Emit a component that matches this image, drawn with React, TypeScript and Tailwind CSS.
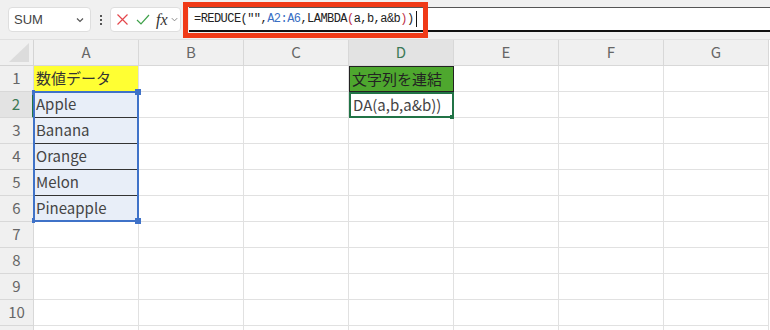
import React from 'react';

const cols = ['A', 'B', 'C', 'D', 'E', 'F', 'G'];
const rows = [1, 2, 3, 4, 5, 6, 7, 8, 9, 10, 11];

const data: Record<string, string> = {
  A1: '数値データ',
  A2: 'Apple',
  A3: 'Banana',
  A4: 'Orange',
  A5: 'Melon',
  A6: 'Pineapple',
  D1: '文字列を連結',
  D2: 'DA(a,b,a&b))',
};

const font = { fontFamily: '"Noto Sans CJK JP", "Noto Sans", sans-serif' };

const cellClass = (key: string, r: number) => {
  if (key === 'A1') return 'bg-[#ffff33] border-r border-b border-[#e1e1e1] text-[#333]';
  if (key[0] === 'A' && r >= 2 && r <= 6) {
    return r < 6
      ? 'bg-[#e8eef8] border-r border-b border-r-[#e1e1e1] border-b-[#333] text-[#444]'
      : 'bg-[#e8eef8] border-r border-b border-[#e1e1e1] text-[#444]';
  }
  if (key === 'D1') return 'bg-[#4ea72e] border border-[#222] text-[#222]';
  if (key === 'D2') return 'bg-white border-2 border-[#217346] text-[#444]';
  return 'bg-white border-r border-b border-[#e1e1e1]';
};

export default function App() {
  return (
    <div className="w-[770px] h-[330px] overflow-hidden bg-[#f0f0f0]" style={font}>
      {/* toolbar */}
      <div className="h-10 flex items-center pl-2 border-b border-[#e0e0e0]">
        <div className="w-[83px] h-[25px] bg-white rounded border border-[#dedede] flex items-center justify-between px-[5px]">
          <span className="text-[13px] text-[#444]" style={{ fontFamily: '"Liberation Sans", sans-serif' }}>SUM</span>
          <svg width="10" height="10" viewBox="0 0 10 10" className="text-[#555]">
            <path d="M2 3.5 L5 6.5 L8 3.5" fill="none" stroke="currentColor" strokeWidth="1.2" />
          </svg>
        </div>
        <div className="w-[19px] flex flex-col items-center gap-[2px]">
          <span className="w-[2px] h-[2px] bg-[#555]" />
          <span className="w-[2px] h-[2px] bg-[#555]" />
          <span className="w-[2px] h-[2px] bg-[#555]" />
        </div>
        <div className="w-[71px] h-[25px] bg-white rounded border border-[#dedede] flex items-center gap-[7px] pl-[5px]">
          <svg width="13" height="13" viewBox="0 0 13 13">
            <path d="M1.5 1.5 L11.5 11.5 M11.5 1.5 L1.5 11.5" stroke="#e4474c" strokeWidth="1.2" fill="none" />
          </svg>
          <svg width="14" height="13" viewBox="0 0 14 13">
            <path d="M1 7 L5 11 L13 2" stroke="#3fa14a" strokeWidth="1.2" fill="none" />
          </svg>
          <span className="text-[16px] italic text-[#333] leading-none -ml-[1px]" style={{ fontFamily: '"Liberation Serif", serif' }}>
            fx
          </span>
          <svg width="9" height="9" viewBox="0 0 10 10" className="-ml-[5px] text-[#888]">
            <path d="M2 3.5 L5 6.5 L8 3.5" fill="none" stroke="currentColor" strokeWidth="1.1" />
          </svg>
        </div>
        <div className="relative flex-1 h-[25px] ml-[8px] bg-white border-y border-t-[#555] border-b-2 border-b-[#111] flex items-center">
          <div className="absolute -left-[6px] -top-[6px] w-[245px] h-[36px] border-[5px] border-[#f03a17]" />
          <span
            className="pl-[5px] text-[12px] tracking-[-0.55px] text-[#222] whitespace-pre"
            style={{ fontFamily: '"Liberation Mono", monospace' }}
          >
            =REDUCE("",<span className="text-[#3a6fc4]">A2:A6</span>,LAMBDA<span className="text-[#c0304a]">(</span>a,b,a&b<span className="text-[#c0304a]">)</span>)
          </span>
          <span className="w-px h-[16px] bg-[#111] ml-[2px]" />
        </div>
      </div>

      {/* grid */}
      <div className="relative grid grid-cols-[34px_repeat(7,105px)] auto-rows-[26px] bg-white">
        <div className="bg-[#f0f0f0] border-r border-b border-[#d4d4d4] flex items-end justify-end pr-[4px] pb-[3px]">
          <svg width="20" height="19" viewBox="0 0 20 19">
            <path d="M20 0 L20 19 L0 19 Z" fill="#dcdcdc" />
          </svg>
        </div>
        {cols.map((c) => (
          <div
            key={c}
            className={`${c === 'D' ? 'bg-[#e3e3e3] text-[#3c7a57]' : 'bg-[#f0f0f0] text-[#666]'} border-r border-b border-[#d8d8d8] flex items-center justify-center text-[15px]`}
          >
            {c}
          </div>
        ))}
        {rows.map((r) => (
          <React.Fragment key={r}>
            <div
              className={`${r === 2 ? 'bg-[#e3e3e3] text-[#3c7a57] border-r-2 border-r-[#217346]' : 'bg-[#f0f0f0] text-[#666] border-r border-r-[#d8d8d8]'} border-b border-b-[#d8d8d8] flex items-center justify-center text-[15px]`}
            >
              {r < 11 ? r : ''}
            </div>
            {cols.map((c) => {
              const key = `${c}${r}`;
              return (
                <div
                  key={key}
                  className={`${cellClass(key, r)} flex items-center px-[2px] text-[15px] overflow-hidden whitespace-nowrap`}
                >
                  {data[key] ?? ''}
                </div>
              );
            })}
          </React.Fragment>
        ))}

        {/* reference range A2:A6 */}
        <div className="absolute left-[33px] top-[51px] w-[106px] h-[131px] border-2 border-[#3f72c8] pointer-events-none">
          <span className="absolute -left-[3px] -top-[3px] w-[3px] h-[5px] bg-[#3f72c8]" />
          <span className="absolute -right-[4px] -top-[4px] w-[6px] h-[6px] bg-[#3f72c8]" />
          <span className="absolute -left-[3px] -bottom-[3px] w-[3px] h-[5px] bg-[#3f72c8]" />
          <span className="absolute -right-[4px] -bottom-[4px] w-[6px] h-[6px] bg-[#3f72c8]" />
        </div>
        <span className="absolute left-[450px] top-[75px] w-[4px] h-[4px] bg-[#217346]" />
      </div>
    </div>
  );
}
